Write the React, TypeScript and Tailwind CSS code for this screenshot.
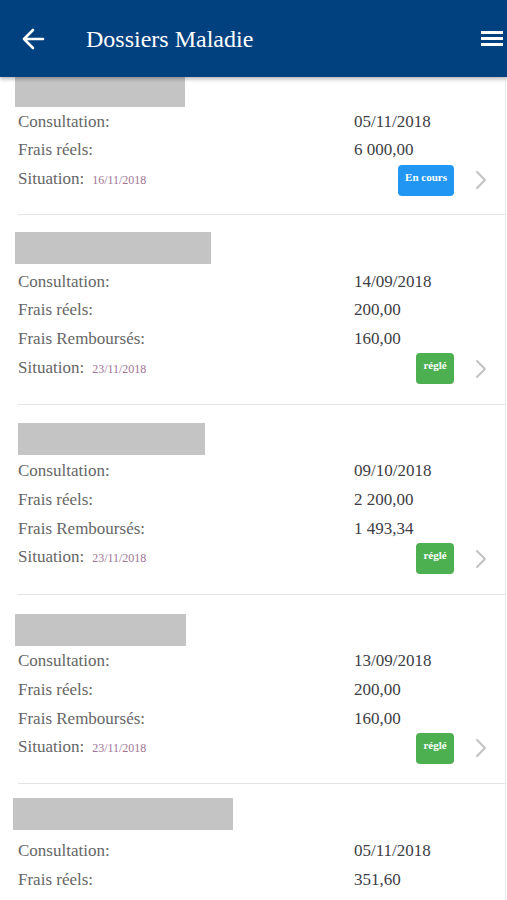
import React from "react";

type Row = { label: string; value: string };
type Card = {
  gray: { ml: number; mt: number; w: number };
  rows: Row[];
  date?: string;
  status?: "encours" | "regle";
};

const cards: Card[] = [
  {
    gray: { ml: 15, mt: 0, w: 170 },
    rows: [
      { label: "Consultation:", value: "05/11/2018" },
      { label: "Frais réels:", value: "6 000,00" },
    ],
    date: "16/11/2018",
    status: "encours",
  },
  {
    gray: { ml: 15, mt: 17, w: 196 },
    rows: [
      { label: "Consultation:", value: "14/09/2018" },
      { label: "Frais réels:", value: "200,00" },
      { label: "Frais Remboursés:", value: "160,00" },
    ],
    date: "23/11/2018",
    status: "regle",
  },
  {
    gray: { ml: 18, mt: 18, w: 187 },
    rows: [
      { label: "Consultation:", value: "09/10/2018" },
      { label: "Frais réels:", value: "2 200,00" },
      { label: "Frais Remboursés:", value: "1 493,34" },
    ],
    date: "23/11/2018",
    status: "regle",
  },
  {
    gray: { ml: 15, mt: 19, w: 171 },
    rows: [
      { label: "Consultation:", value: "13/09/2018" },
      { label: "Frais réels:", value: "200,00" },
      { label: "Frais Remboursés:", value: "160,00" },
    ],
    date: "23/11/2018",
    status: "regle",
  },
  {
    gray: { ml: 13, mt: 14, w: 220 },
    rows: [
      { label: "Consultation:", value: "05/11/2018" },
      { label: "Frais réels:", value: "351,60" },
    ],
  },
];

function Chevron() {
  return (
    <svg width="12" height="20" viewBox="0 0 12 20" className="block">
      <polyline
        points="2,2 10,10 2,18"
        fill="none"
        stroke="#c2c2c2"
        strokeWidth="2"
        strokeLinecap="round"
        strokeLinejoin="round"
      />
    </svg>
  );
}

function CardView({ card, first }: { card: Card; first: boolean }) {
  return (
    <div className={first ? "" : "border-t border-[#e3e3e3] ml-[18px]"}>
      <div
        className={first ? "h-[30px]" : "h-[52px] -ml-[18px]"}
        style={{ paddingTop: card.gray.mt }}
      >
        <div
          className={first ? "h-[30px] bg-[#c4c4c4]" : "h-[32px] bg-[#c4c4c4]"}
          style={{ marginLeft: card.gray.ml, width: card.gray.w }}
        />
      </div>
      <div className={first ? "pl-[18px] pb-[21px]" : "pb-[22px]"}>
        {card.rows.map((r, i) => (
          <div key={i} className="flex h-[28.7px] items-center">
            <div className="w-[336px] text-[17px] text-[#666666]">{r.label}</div>
            <div className="text-[17px] text-[#3d3d45]">{r.value}</div>
          </div>
        ))}
        {card.status && (
          <div className="flex h-[28.7px] items-center">
            <div className="flex items-baseline gap-[8px]">
              <span className="text-[17px] text-[#666666]">Situation:</span>
              <span className="text-[12px] text-[#a07596]">{card.date}</span>
            </div>
            <div className="ml-auto flex items-center pr-[18px] mt-[3px]">
              {card.status === "encours" ? (
                <div className="flex h-[31px] w-[56px] justify-center rounded-[4px] bg-[#2196f3] pt-[5px] text-[11px] font-bold leading-[14px] text-white">
                  En cours
                </div>
              ) : (
                <div className="flex h-[31px] w-[38px] justify-center rounded-[4px] bg-[#4caf50] pt-[5px] text-[11px] font-bold leading-[14px] text-white">
                  réglé
                </div>
              )}
              <div className="ml-[21px]">
                <Chevron />
              </div>
            </div>
          </div>
        )}
      </div>
    </div>
  );
}

export default function App() {
  return (
    <div className="relative h-[900px] w-[507px] overflow-hidden bg-white font-['Liberation_Serif','Times_New_Roman',serif]">
      <div className="relative z-10 flex h-[77px] items-center bg-[#02417f] shadow-[0_2px_4px_rgba(0,0,0,0.3)]">
        <div className="ml-[21px]">
          <svg width="24" height="24" viewBox="0 0 24 24" className="block">
            <path
              d="M22 12H3M12 3L3 12l9 9"
              fill="none"
              stroke="white"
              strokeWidth="2.6"
              strokeLinecap="round"
              strokeLinejoin="round"
            />
          </svg>
        </div>
        <div className="ml-[41px] text-[24px] text-white">Dossiers Maladie</div>
        <div className="ml-auto mr-[4px] flex flex-col gap-[3.5px]">
          <div className="h-[2.7px] w-[22px] bg-white" />
          <div className="h-[2.7px] w-[22px] bg-white" />
          <div className="h-[2.7px] w-[22px] bg-white" />
        </div>
      </div>
      <div className="border-r border-[#ececec] w-[506px]">
        {cards.map((c, i) => (
          <CardView key={i} card={c} first={i === 0} />
        ))}
      </div>
    </div>
  );
}
